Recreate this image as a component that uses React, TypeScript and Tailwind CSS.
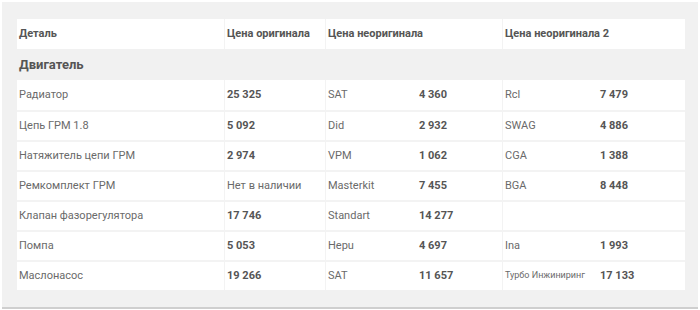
import React from 'react';

type Row = {
  part: string;
  orig: string;
  origBold: boolean;
  alt1: [string, string] | null;
  alt2: [string, string] | null;
  smallAlt2?: boolean;
};

const ROWS: Row[] = [
  { part: 'Радиатор', orig: '25 325', origBold: true, alt1: ['SAT', '4 360'], alt2: ['Rcl', '7 479'] },
  { part: 'Цепь ГРМ 1.8', orig: '5 092', origBold: true, alt1: ['Did', '2 932'], alt2: ['SWAG', '4 886'] },
  { part: 'Натяжитель цепи ГРМ', orig: '2 974', origBold: true, alt1: ['VPM', '1 062'], alt2: ['CGA', '1 388'] },
  { part: 'Ремкомплект ГРМ', orig: 'Нет в наличии', origBold: false, alt1: ['Masterkit', '7 455'], alt2: ['BGA', '8 448'] },
  { part: 'Клапан фазорегулятора', orig: '17 746', origBold: true, alt1: ['Standart', '14 277'], alt2: null },
  { part: 'Помпа', orig: '5 053', origBold: true, alt1: ['Hepu', '4 697'], alt2: ['Ina', '1 993'] },
  { part: 'Маслонасос', orig: '19 266', origBold: true, alt1: ['SAT', '11 657'], alt2: ['Турбо Инжиниринг', '17 133'], smallAlt2: true },
];

const cols = 'grid grid-cols-[207px_101px_177px_183px]';

const App: React.FC = () => {
  return (
    <div className="w-[700px] h-[310px] bg-white font-['Roboto',sans-serif] text-[11px] text-[#6a6a6a]">
      <div className="mx-[2px] mt-[2px] h-[307px] bg-[#f1f1f1] border-b-2 border-[#cfcfcf] pl-[15px] pt-[17px]">
        <div className="w-[668px]">
          <div className={`${cols} h-[30px] bg-white font-bold text-[#555]`}>
            <div className="flex items-center pl-[2px]">Деталь</div>
            <div className="flex items-center pl-[2px] border-l border-[#f3f3f3]">Цена оригинала</div>
            <div className="flex items-center pl-[2px] border-l border-[#f3f3f3]">Цена неоригинала</div>
            <div className="flex items-center pl-[2px] border-l border-[#f3f3f3]">Цена неоригинала 2</div>
          </div>
          <div className="h-[31px] flex items-center pl-[2px] font-bold text-[13px] text-[#555]">Двигатель</div>
          {ROWS.map((r, idx) => (
            <div
              key={idx}
              className={`${cols} h-[30px] bg-white ${idx > 0 ? 'border-t-2 border-[#f3f3f3]' : ''}`}
            >
              <div className="flex items-center pl-[2px]">{r.part}</div>
              <div className={`flex items-center pl-[2px] border-l border-[#f3f3f3] ${r.origBold ? 'font-bold text-[#555]' : ''}`}>
                {r.orig}
              </div>
              <div className="flex items-center pl-[2px] border-l border-[#f3f3f3]">
                {r.alt1 && (
                  <>
                    <span className="w-[91px]">{r.alt1[0]}</span>
                    <span className="font-bold text-[#555]">{r.alt1[1]}</span>
                  </>
                )}
              </div>
              <div className="flex items-center pl-[2px] border-l border-[#f3f3f3]">
                {r.alt2 && (
                  <>
                    <span className={`w-[95px] ${r.smallAlt2 ? 'text-[9px]' : ''}`}>{r.alt2[0]}</span>
                    <span className="font-bold text-[#555]">{r.alt2[1]}</span>
                  </>
                )}
              </div>
            </div>
          ))}
        </div>
      </div>
    </div>
  );
};

export default App;
